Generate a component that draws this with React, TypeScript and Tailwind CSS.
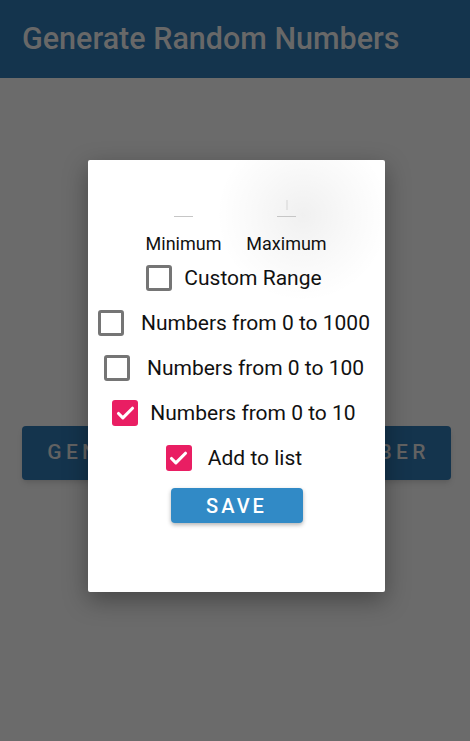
import { Check } from "lucide-react";

type Row = { label: string; checked: boolean; gap: string };

const rows: Row[] = [
  { label: "Custom Range", checked: false, gap: "gap-[12px]" },
  { label: "Numbers from 0 to 1000", checked: false, gap: "gap-[17px]" },
  { label: "Numbers from 0 to 100", checked: false, gap: "gap-[17px]" },
  { label: "Numbers from 0 to 10", checked: true, gap: "gap-[12px]" },
  { label: "Add to list", checked: true, gap: "gap-[16px]" },
];

function Box({ checked }: { checked: boolean }) {
  if (checked) {
    return (
      <span className="flex h-[26px] w-[26px] shrink-0 items-center justify-center rounded-[3px] bg-[#e91e63]">
        <Check className="h-[21px] w-[21px] text-white" strokeWidth={3.6} />
      </span>
    );
  }
  return <span className="h-[26px] w-[26px] shrink-0 rounded-[3px] border-[3px] border-[#757575]" />;
}

function RangeInput({ label, cursor }: { label: string; cursor?: boolean }) {
  return (
    <div className="flex w-[103px] flex-col items-center">
      <div className="relative flex h-[26px] w-[19px] items-end border-b border-[#c6c6c6]">
        {cursor && <span className="absolute bottom-[6px] left-[9px] h-[10px] w-[2px] bg-[#e4e4e4]" />}
      </div>
      <span className="mt-[17px] text-[18px] leading-[20px] text-[#111]">{label}</span>
    </div>
  );
}

export default function App() {
  return (
    <div className="relative h-[741px] w-full overflow-hidden bg-[#6b6b6b] font-['Roboto',sans-serif]">
      <div className="flex h-[78px] items-center bg-[#14344d] px-[22px]">
        <h1 className="text-[30.5px] font-medium leading-none text-[#686868]">Generate Random Numbers</h1>
      </div>

      <div className="pl-[22px] pr-[19px] pt-[348px]">
        <div className="flex h-[54px] items-center justify-center rounded-[4px] bg-[#14344d] pl-[4px] shadow-md">
          <span className="text-[21px] font-medium tracking-[4.3px] text-[#626262]">GENERATE RANDOM NUMBER</span>
        </div>
      </div>

      <div className="absolute left-[88px] top-[160px] h-[432px] w-[297px] overflow-hidden rounded-[2px] bg-white shadow-[0_8px_24px_rgba(0,0,0,0.35)]">
        <div className="pointer-events-none absolute left-[130px] top-[-35px] h-[180px] w-[170px] rounded-full bg-[radial-gradient(circle,rgba(0,0,0,0.06)_0%,rgba(0,0,0,0.025)_40%,rgba(0,0,0,0)_70%)]" />
        <div className="relative flex flex-col items-center pt-[31px]">
          <div className="flex justify-center pr-[3px]">
            <RangeInput label="Minimum" />
            <RangeInput label="Maximum" cursor />
          </div>
          <div className="mt-[11px] flex flex-col items-center gap-[19px] pr-[5px]">
            {rows.map((r) => (
              <div key={r.label} className={`flex h-[26px] items-center ${r.gap}`}>
                <Box checked={r.checked} />
                <span className="text-[21px] leading-none text-[#111]">{r.label}</span>
              </div>
            ))}
          </div>
          <button className="mt-[17px] flex h-[35px] w-[132px] items-center justify-center rounded-[4px] bg-[#318ac6] text-[20px] font-medium tracking-[3px] text-white shadow-[0_2px_4px_rgba(0,0,0,0.3)]">
            SAVE
          </button>
        </div>
      </div>
    </div>
  );
}
